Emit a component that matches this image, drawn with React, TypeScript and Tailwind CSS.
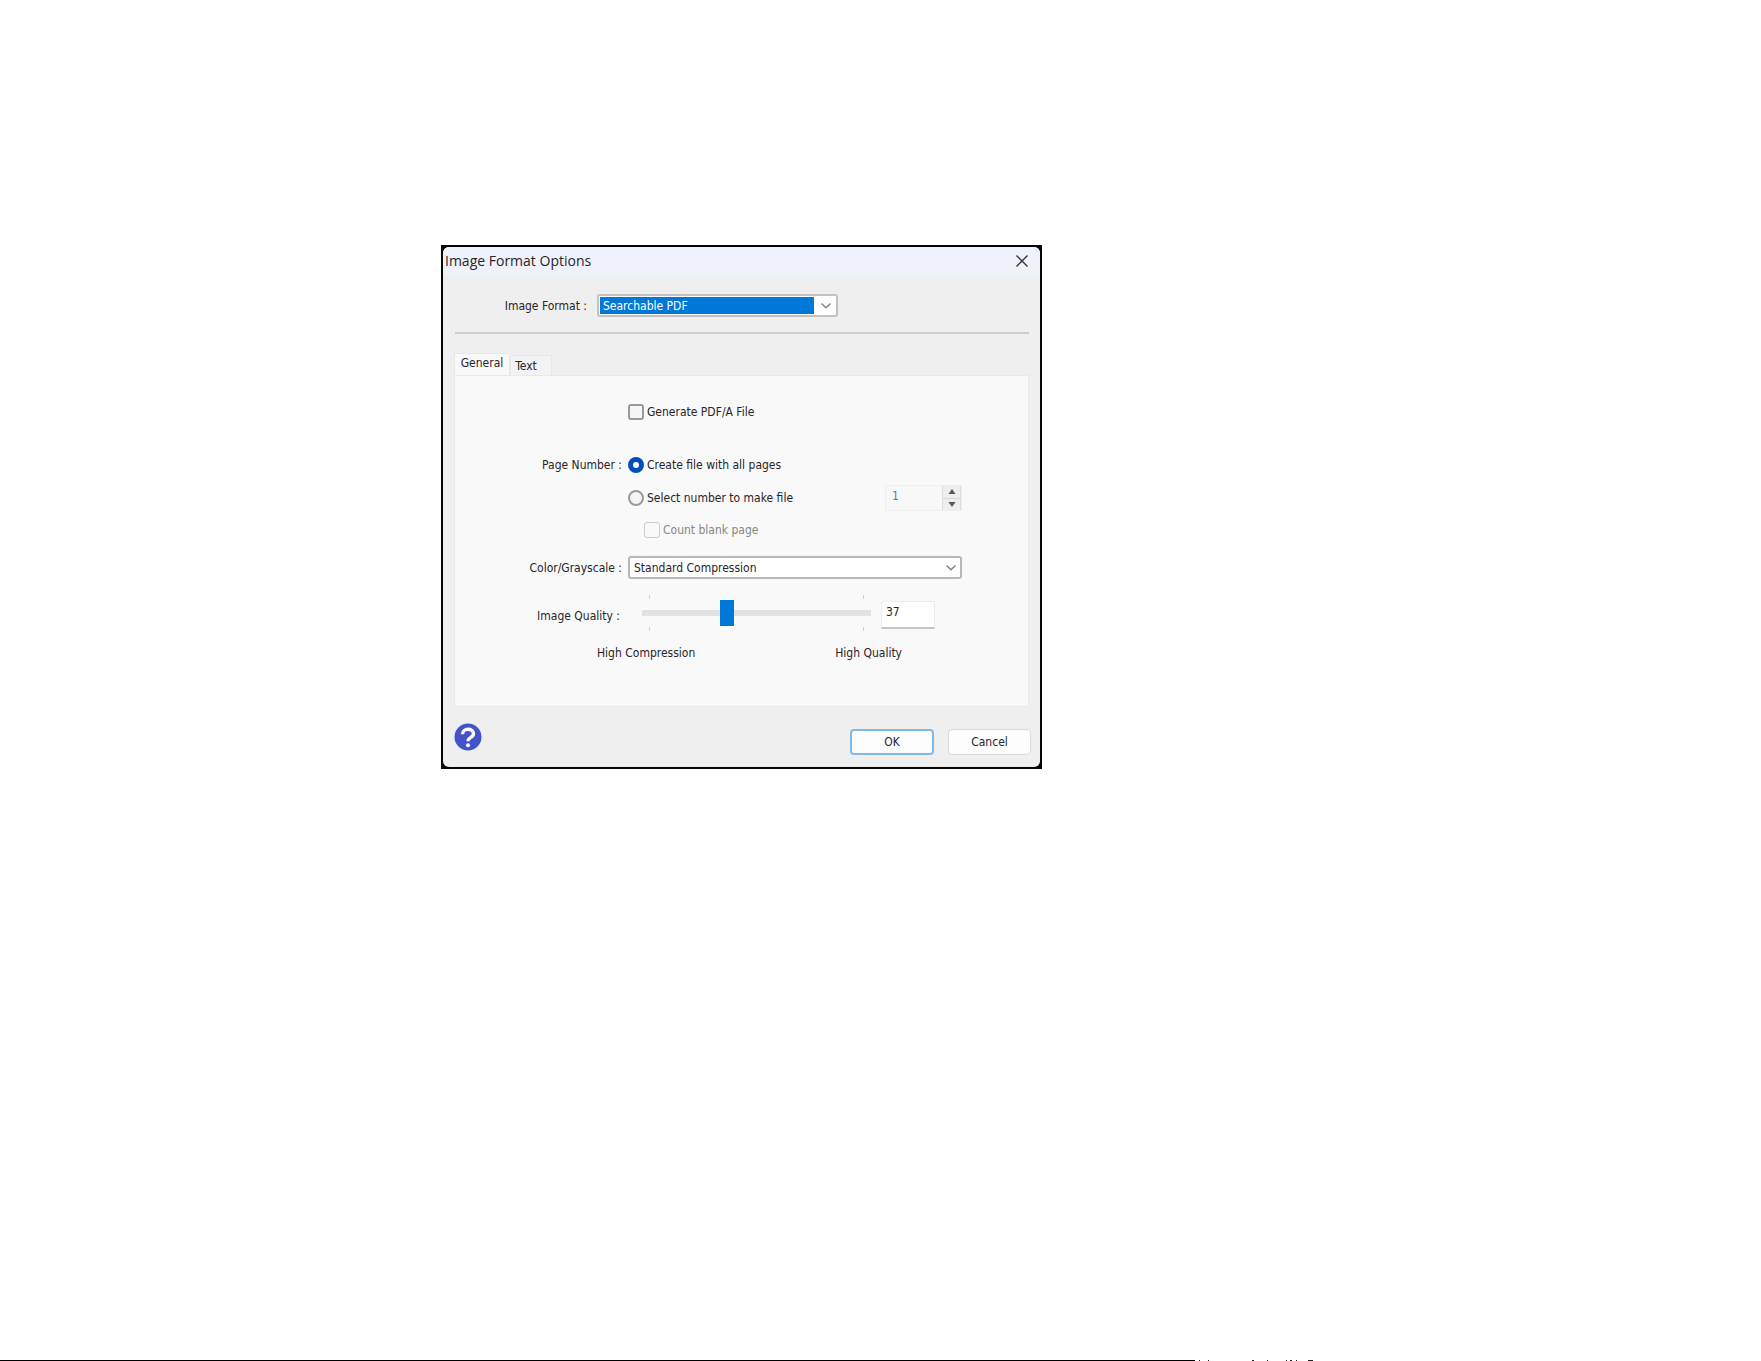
import { useState } from "react"
import type { ReactNode } from "react"
import clsx from "clsx"

function Chevron() {
  return (
    <svg
      viewBox="0 0 12 12"
      className="pointer-events-none h-3 w-3 shrink-0 fill-none stroke-[#808080]"
      strokeWidth="1.4"
      aria-hidden="true"
    >
      <path d="M1.5 3.5 L6 7.7 L10.5 3.5" />
    </svg>
  )
}

function Row({ id, label, className, children }: { id?: string; label?: string; className?: string; children: ReactNode }) {
  return (
    <div className={clsx("grid grid-cols-[167px_1fr] items-center gap-x-1.5", className)}>
      {label ? (
        <label htmlFor={id} className="text-right whitespace-nowrap">
          {label}
        </label>
      ) : (
        <span />
      )}
      <div className="flex items-center">{children}</div>
    </div>
  )
}

function Ticks() {
  return (
    <div className="flex justify-between px-[7px]">
      <span className="h-1 w-px bg-[#d0d0d0]" />
      <span className="h-1 w-px bg-[#d0d0d0]" />
    </div>
  )
}

const radioClass =
  "h-4 w-4 appearance-none rounded-full border-2 border-[#9a9a9a] bg-[#f5f5f5] checked:border-[5px] checked:border-[#0050b8] checked:bg-white"

export default function App() {
  const [format, setFormat] = useState("Searchable PDF")
  const [tab, setTab] = useState("General")
  const [pdfA, setPdfA] = useState(false)
  const [pages, setPages] = useState("all")
  const [compression, setCompression] = useState("Standard Compression")
  const [quality, setQuality] = useState(37)

  return (
    <div className="flex min-h-screen flex-col bg-white font-['DejaVu_Sans_Condensed','Noto_Sans',sans-serif] text-xs leading-4 text-[#2a2428]">
      <main className="pt-[245px] pl-[441px]">
        <div role="dialog" aria-labelledby="title" className="w-full max-w-[601px] bg-[#050505] p-0.5">
          <div className="overflow-hidden rounded-md bg-[#efefef]">
            <header className="flex h-[30px] items-center justify-between bg-[#eff2fa] pr-2.5 pb-0.5 pl-0.5">
              <h1 id="title" className="font-['Open_Sans',sans-serif] text-sm leading-5">
                Image Format Options
              </h1>
              <button type="button" aria-label="Close" className="p-0.5">
                <svg viewBox="0 0 12 12" className="h-3 w-3 fill-none stroke-[#333333]" strokeWidth="1.4">
                  <path d="M0.5 0.5 L11.5 11.5 M11.5 0.5 L0.5 11.5" />
                </svg>
              </button>
            </header>

            <div className="px-[11px] pt-[17px] pb-3">
              <div className="ml-px flex items-center border-b-2 border-[#cfcfcf] pb-[15px]">
                <label htmlFor="format" className="w-[132px] text-right">
                  Image Format :
                </label>
                <div className="ml-2.5 flex h-[23px] w-[241px] items-center rounded-[3px] border-2 border-[#c2c2c2] bg-white pr-1">
                  <select
                    id="format"
                    value={format}
                    onChange={(e) => setFormat(e.target.value)}
                    className="ml-px h-[17px] flex-1 appearance-none bg-[#0078d7] pl-[3px] leading-4 text-white outline-none"
                  >
                    <option>Searchable PDF</option>
                    <option>PDF</option>
                    <option>JPEG</option>
                    <option>TIFF</option>
                  </select>
                  <span className="ml-1.5">
                    <Chevron />
                  </span>
                </div>
              </div>

              <div role="tablist" className="mt-[19px] flex items-end">
                {["General", "Text"].map((name) => (
                  <button
                    key={name}
                    type="button"
                    role="tab"
                    aria-selected={tab === name}
                    onClick={() => setTab(name)}
                    className={clsx(
                      "border border-b-0 border-[#e8e8e8]",
                      tab === name ? "h-[22px] w-14 bg-[#f9f9f9] pb-1" : "h-5 w-[42px] bg-[#f3f3f3] pr-2.5"
                    )}
                  >
                    {name}
                  </button>
                ))}
              </div>

              <div role="tabpanel" className="border border-[#e9e9e9] bg-[#f9f9f9] pt-6 pb-[45px]">
                <Row className="h-6">
                  <input
                    id="pdfa"
                    type="checkbox"
                    checked={pdfA}
                    onChange={(e) => setPdfA(e.target.checked)}
                    className="h-4 w-4 appearance-none rounded-[3px] border-2 border-[#9a9a9a] bg-[#f5f5f5] checked:bg-[#0050b8]"
                  />
                  <label htmlFor="pdfa" className="ml-[3px]">
                    Generate PDF/A File
                  </label>
                </Row>

                <Row id="all" label="Page Number :" className="mt-[29px] h-6">
                  <input id="all" type="radio" name="pages" checked={pages === "all"} onChange={() => setPages("all")} className={radioClass} />
                  <label htmlFor="all" className="ml-[3px]">
                    Create file with all pages
                  </label>
                </Row>

                <Row className="mt-2 h-[26px]">
                  <input id="some" type="radio" name="pages" checked={pages === "some"} onChange={() => setPages("some")} className={radioClass} />
                  <label htmlFor="some" className="ml-[3px] flex-1">
                    Select number to make file
                  </label>
                  <div className="mr-[66px] flex h-[26px] w-[77px] border border-[#eeeeee] bg-[#f8f8f8]">
                    <input
                      aria-label="Number of pages"
                      defaultValue="1"
                      disabled
                      className="w-14 min-w-0 flex-1 bg-transparent pb-1 pl-1.5 text-[#777777]"
                    />
                    <div className="flex w-[19px] flex-col divide-y divide-[#d5d5d5] border-x border-[#dddddd] bg-[#eeeeee]">
                      <button type="button" aria-label="Increase" className="flex flex-1 items-center justify-center">
                        <svg viewBox="0 0 8 5" className="h-[5px] w-2 fill-[#555555]">
                          <path d="M4 0 L7.5 5 H0.5 Z" />
                        </svg>
                      </button>
                      <button type="button" aria-label="Decrease" className="flex flex-1 items-center justify-center">
                        <svg viewBox="0 0 8 5" className="h-[5px] w-2 fill-[#555555]">
                          <path d="M0.5 0 H7.5 L4 5 Z" />
                        </svg>
                      </button>
                    </div>
                  </div>
                </Row>

                <Row className="mt-[7px] h-6 text-[#858585]">
                  <input id="blank" type="checkbox" disabled className="ml-4 h-4 w-4 appearance-none rounded-[3px] border border-[#cccccc] bg-[#f9f9f9]" />
                  <label htmlFor="blank" className="ml-[3px]">
                    Count blank page
                  </label>
                </Row>

                <Row id="color" label="Color/Grayscale :" className="mt-3.5">
                  <div className="mr-[66px] flex h-[23px] flex-1 items-center rounded-[3px] border-2 border-[#b8b8b8] bg-white pr-[3px]">
                    <select
                      id="color"
                      value={compression}
                      onChange={(e) => setCompression(e.target.value)}
                      className="flex-1 appearance-none bg-white pl-1 leading-4 outline-none"
                    >
                      <option>Standard Compression</option>
                      <option>High Compression</option>
                    </select>
                    <Chevron />
                  </div>
                </Row>

                <div className="mt-4 grid grid-cols-[165px_1fr] items-center">
                  <label htmlFor="quality" className="pt-1.5 text-right">
                    Image Quality :
                  </label>
                  <div className="flex items-center pl-[22px]">
                    <div className="flex w-[229px] flex-col">
                      <Ticks />
                      <input
                        id="quality"
                        type="range"
                        min="1"
                        max="100"
                        value={quality}
                        onChange={(e) => setQuality(Number(e.target.value))}
                        className="h-7 w-full appearance-none bg-transparent [&::-webkit-slider-runnable-track]:h-1.5 [&::-webkit-slider-runnable-track]:bg-[#e1e3e3] [&::-webkit-slider-thumb]:-mt-[10px] [&::-webkit-slider-thumb]:h-[26px] [&::-webkit-slider-thumb]:w-3.5 [&::-webkit-slider-thumb]:appearance-none [&::-webkit-slider-thumb]:bg-[#0078d7]"
                      />
                      <Ticks />
                    </div>
                    <input
                      aria-label="Image quality value"
                      value={quality}
                      onChange={(e) => setQuality(Number(e.target.value) || 0)}
                      className="mt-1 ml-2.5 h-7 w-[54px] border border-b-2 border-[#ececec] border-b-[#c4c4c4] bg-white pb-1.5 pl-1 outline-none"
                    />
                  </div>
                </div>

                <div className="mt-3.5 mr-[126px] ml-[142px] flex justify-between">
                  <span>High Compression</span>
                  <span>High Quality</span>
                </div>
              </div>

              <footer className="mt-4 flex items-start">
                <button type="button" aria-label="Help">
                  <svg viewBox="0 0 28 28" className="h-7 w-7">
                    <circle cx="14" cy="14" r="13.5" fill="#4354c8" />
                    <path
                      d="M8.5 11.2 C8.5 4.6 19.5 4.8 19.5 10.8 C19.5 14.6 14 14.2 14 18.2"
                      fill="none"
                      stroke="#ffffff"
                      strokeWidth="3.4"
                    />
                    <circle cx="14" cy="22.3" r="2" fill="#ffffff" />
                  </svg>
                </button>
                <div className="mt-1.5 -mr-0.5 ml-auto flex gap-3.5">
                  <button type="button" className="h-[26px] w-[84px] rounded border-2 border-[#7db9ea] bg-[#fdfdfd]">
                    OK
                  </button>
                  <button type="button" className="h-[26px] w-[83px] rounded border border-[#dadada] bg-[#fdfdfd]">
                    Cancel
                  </button>
                </div>
              </footer>
            </div>
          </div>
        </div>
      </main>

      <div className="mt-auto flex h-px">
        <div className="w-[1195px] bg-black" />
        <svg viewBox="0 0 130 1" className="h-px w-[130px]" fill="#222222" aria-hidden="true">
          <path d="M4 0h1v1h-1z M13 0h1v1h-1z M57 0h2v1h-2z M72 0h1v1h-1z M91 0h1v1h-1z M95 0h2v1h-2z M101 0h1v1h-1z M113 0h5v1h-5z" />
        </svg>
      </div>
    </div>
  )
}
